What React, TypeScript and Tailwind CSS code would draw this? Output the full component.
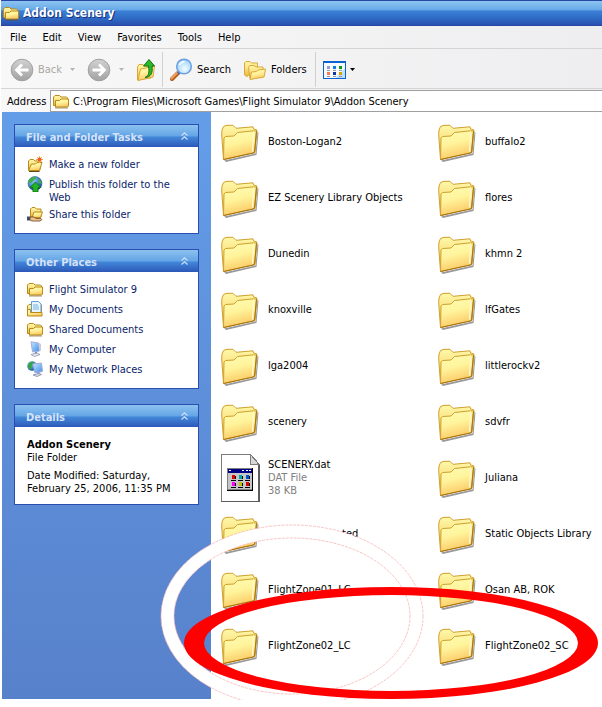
import type { ReactNode } from "react"

type IconName = "newFolder" | "web" | "share" | "folder" | "documents" | "computer" | "network"

const menus = ["File", "Edit", "View", "Favorites", "Tools", "Help"]

const tasks: { icon: IconName; label: string }[] = [
  { icon: "newFolder", label: "Make a new folder" },
  { icon: "web", label: "Publish this folder to the Web" },
  { icon: "share", label: "Share this folder" },
]

const places: { icon: IconName; label: string }[] = [
  { icon: "folder", label: "Flight Simulator 9" },
  { icon: "documents", label: "My Documents" },
  { icon: "folder", label: "Shared Documents" },
  { icon: "computer", label: "My Computer" },
  { icon: "network", label: "My Network Places" },
]

const leftFiles = [
  "Boston-Logan2",
  "EZ Scenery Library Objects",
  "Dunedin",
  "knoxville",
  "lga2004",
  "scenery",
  "SCENERY.dat",
  "ted",
  "FlightZone01_LC",
  "FlightZone02_LC",
]

const rightFiles = [
  "buffalo2",
  "flores",
  "khmn 2",
  "lfGates",
  "littlerockv2",
  "sdvfr",
  "Juliana",
  "Static Objects Library",
  "Osan AB, ROK",
  "FlightZone02_SC",
]

function Gradients() {
  return (
    <svg width="0" height="0" className="absolute" aria-hidden="true">
      <defs>
        <linearGradient id="front" x1="0" y1="0" x2="0.3" y2="1">
          <stop offset="0" stopColor="#fffcb4" />
          <stop offset="0.5" stopColor="#fff49c" />
          <stop offset="1" stopColor="#fcca66" />
        </linearGradient>
        <linearGradient id="back" x1="0" y1="0" x2="0" y2="1">
          <stop offset="0" stopColor="#fff8a8" />
          <stop offset="0.4" stopColor="#fbe488" />
          <stop offset="1" stopColor="#e9b63c" />
        </linearGradient>
        <linearGradient id="disc" x1="0" y1="0" x2="0" y2="1">
          <stop offset="0" stopColor="#d2d2d2" />
          <stop offset="1" stopColor="#a2a2a2" />
        </linearGradient>
        <linearGradient id="screen" x1="0" y1="0" x2="1" y2="1">
          <stop offset="0" stopColor="#c4e8ff" />
          <stop offset="1" stopColor="#3c8ce6" />
        </linearGradient>
        <radialGradient id="lens" cx="0.55" cy="0.65" r="0.6">
          <stop offset="0" stopColor="#f4fdff" />
          <stop offset="1" stopColor="#9fd4fb" />
        </radialGradient>
        <radialGradient id="globe" cx="0.35" cy="0.3" r="0.8">
          <stop offset="0" stopColor="#8cd0ff" />
          <stop offset="1" stopColor="#0c3fa0" />
        </radialGradient>
      </defs>
    </svg>
  )
}

function SmallFolderShape() {
  return (
    <>
      <path d="M.5 12.500V4L2 2.500h4.500L8 4h5.500l1 1v7.500z" fill="url(#back)" stroke="#b98a18" />
      <path d="M2.500 7.500h4L8 6h7.500v7l-1 1h-12z" fill="url(#front)" stroke="#b98a18" />
      <path d="M2 15h13" stroke="#6b5212" strokeOpacity="0.6" />
    </>
  )
}

function OpenFolderShape() {
  return (
    <>
      <path d="M1.500 14V5L3 3.500h3.500L8 5h5v9z" fill="url(#back)" stroke="#b98a18" />
      <path d="M1.500 14.500 4.500 8h4L10 6.500h5L12.500 14.500z" fill="url(#front)" stroke="#b98a18" />
      <path d="M2 15.500h10.500" stroke="#5b4a1c" />
    </>
  )
}

function ComputerShape() {
  return (
    <>
      <path d="M4 .8 11.500 2 12.500 10 5.500 11z" fill="url(#screen)" stroke="#a4aedc" />
      <path d="M11.500 1.500 14 3v6.500l-1.500 1z" fill="#c7cbe0" />
      <path d="M9 11v2" stroke="#7c84a8" strokeWidth="2" />
      <path d="M4 13.500 10 12l3 1.500-5.500 2z" fill="#e6e9f2" stroke="#8b92ac" strokeWidth="0.800" />
    </>
  )
}

function SmallIcon({ name }: { name: IconName }) {
  return (
    <svg viewBox="0 0 16 16" className="size-4 shrink-0" aria-hidden="true">
      {name === "folder" && <SmallFolderShape />}
      {name === "newFolder" && (
        <>
          <OpenFolderShape />
          <path d="M12.500 0v7M9 3.500h7M10 1l5 5M15 1l-5 5" stroke="#ffb43c" />
          <circle cx="12.500" cy="3.500" r="2" fill="#f0562a" />
        </>
      )}
      {name === "web" && (
        <>
          <circle cx="8" cy="7.500" r="7" fill="url(#globe)" stroke="#16468c" strokeWidth="0.500" />
          <path d="M2 4c2-3 5-3.500 7-3 1 1-1 2-2 3S5 7 3 7 1 6 2 4zM11 3c2 0 4 3 4 5l-3-1z" fill="#3fae49" />
          <path d="M8.500 6 14 11.500h-3V16H6v-4.500H3z" fill="#22b522" stroke="#0c6a12" strokeWidth="0.800" />
        </>
      )}
      {name === "share" && (
        <>
          <path d="M3.500 11V3L5 1.500h3L9.500 3H14v8z" fill="url(#back)" stroke="#b98a18" />
          <path d="M5 11.500 7 6h8.500L13.500 11.500z" fill="url(#front)" stroke="#b98a18" />
          <path d="M0 10.500h3v4H0z" fill="#3c4c6c" />
          <path d="M3 11h4l2 1.500h5l1 1-2 1.500H5l-2-1z" fill="#f0c090" stroke="#6a4420" strokeWidth="0.800" />
        </>
      )}
      {name === "documents" && (
        <>
          <path d="M.5 13V5L2 3.500h4L7 4h7.500v9z" fill="url(#back)" stroke="#b98a18" />
          <path d="M4.500 12V.5h7l2.500 2.500V12z" fill="#e8f5ff" stroke="#5f9fdc" />
          <path d="M6 4h5M6 6h6M6 8h6" stroke="#72b4e8" />
          <path d="M.5 15v-6.500h3v3H15V15z" fill="url(#front)" stroke="#b98a18" />
        </>
      )}
      {name === "computer" && <ComputerShape />}
      {name === "network" && (
        <>
          <circle cx="5" cy="5" r="4.800" fill="url(#globe)" />
          <path d="M1 4c1-3 4-4 6-3L5 4 4 9 1 7z" fill="#35a540" />
          <path d="M6 3 14.500 2 15.500 10.500 8 12z" fill="url(#screen)" stroke="#a4aedc" />
          <path d="M11.500 11.500v2" stroke="#7c84a8" strokeWidth="2" />
          <path d="M6 14 12 12.500l2.500 1-4.500 2z" fill="#dfe3ee" stroke="#7f86a6" strokeWidth="0.800" />
        </>
      )}
    </svg>
  )
}

function LargeFolder() {
  return (
    <svg viewBox="0 -1 40 40" className="size-10 shrink-0 overflow-visible" aria-hidden="true">
      <path d="M4 37.500 35.500 30.500 37.500 9l1 .5-2 22.500L6 39z" fill="#55555a" fillOpacity="0.600" />
      <path
        d="M3.500 36.500 1.700 12 2 7l1.500-3.500L7 2.300h6l3 3 17-1.500.7 2.200 3.300 1-2 22z"
        fill="url(#back)"
        stroke="#cfa02c"
        strokeLinejoin="round"
      />
      <path
        d="M3.500 36.500 4 15l1.500-1.500 8.500-.5 3.500-3.500 16-1.700 3 .2-2 21.500z"
        fill="url(#front)"
        stroke="#cfa02c"
        strokeLinejoin="round"
      />
      <path d="M33.500 9.500 32.500 28.500" stroke="#fffbd8" strokeWidth="1.200" />
      <path d="M3.500 36.500 34.500 29.800 36.500 8" fill="none" stroke="#a87412" />
    </svg>
  )
}

function DatFileIcon() {
  return (
    <svg viewBox="0 0 40 48" className="h-12 w-10 shrink-0" shapeRendering="crispEdges" aria-hidden="true">
      <path d="M1.500.5h29l8 9v38h-37z" fill="#fff" stroke="#7c7c7c" />
      <path d="M38.500 10v37.500H1" fill="none" stroke="#5c5c5c" strokeWidth="2" />
      <path d="M30.500.5v9.500h8z" fill="#d8d8d8" stroke="#7c7c7c" />
      <path d="M7 14h26v23H7z" fill="#000" />
      <path d="M7 14h25v22H7z" fill="#808080" />
      <path d="M8 15h24v4H8z" fill="#000084" />
      <path d="M8 19h24v16H8z" fill="#c6c6c6" />
      <path d="M9 16h2v1H9zM22 16h2v1h-2zM26 16h2v1h-2zM29 16h2v1h-2z" fill="#fff" />
      <path d="M12 21h3v4h-3zM26 28h3v4h-3z" fill="#e00000" />
      <path d="M19 21h3v4h-3z" fill="#00a5a5" />
      <path d="M26 21h3v4h-3z" fill="#0050d0" />
      <path d="M12 28h3v4h-3z" fill="#ff00ff" />
      <path d="M19 28h3v4h-3z" fill="#c0c000" />
      <path d="M15 22h1v3h-1zM22 22h1v3h-1zM29 22h1v3h-1zM15 29h1v3h-1zM22 29h1v3h-1zM29 29h1v3h-1z" fill="#000" />
      <path d="M11 26h5v1h-5zM18 26h5v1h-5zM25 26h5v1h-5zM11 33h5v1h-5zM18 33h5v1h-5zM25 33h5v1h-5z" fill="#000" />
    </svg>
  )
}

function RoundArrow({ forward = false }: { forward?: boolean }) {
  return (
    <svg viewBox="0 0 24 24" className="size-6 shrink-0" aria-hidden="true">
      <circle cx="12" cy="12" r="10.800" fill="url(#disc)" stroke="#a0a0a0" />
      <path
        d={forward ? "M5.500 12h12M12 6.500l5.500 5.500-5.500 5.500" : "M18.500 12h-12M12 6.500 6.500 12l5.500 5.500"}
        fill="none"
        stroke="#fff"
        strokeWidth="2.800"
      />
    </svg>
  )
}

function Caret({ dark = false }: { dark?: boolean }) {
  return (
    <svg viewBox="0 0 5 3" className="h-[3px] w-[5px] shrink-0" aria-hidden="true">
      <path d="M0 0h5L2.500 3z" fill={dark ? "#000" : "#b4b4ae"} />
    </svg>
  )
}

function Toolbar() {
  return (
    <div className="flex h-10 items-center border-b border-[#d4d4d4] pt-0.5">
      <button className="ml-[9px] flex items-center gap-1 text-[#a8a8a0]">
        <RoundArrow />
        Back
      </button>
      <button aria-label="Back history" className="ml-2 flex h-6 items-center">
        <Caret />
      </button>
      <button aria-label="Forward" className="ml-3">
        <RoundArrow forward />
      </button>
      <button aria-label="Forward history" className="ml-2 flex h-6 items-center">
        <Caret />
      </button>
      <button aria-label="Up" className="ml-3">
        <svg viewBox="0 0 20 24" className="h-6 w-5" aria-hidden="true">
          <path d="M1.500 22V9L3 6.500h4L8.500 8H15v12z" fill="url(#back)" stroke="#dca83a" />
          <path d="M2 22.500 4.500 11 10 10l8.500-2L17 19z" fill="url(#front)" stroke="#dca83a" />
          <path d="M9 19.500c4-2 4.500-5 3.500-11.500H7.500L13 1.500 18.500 8H16c1 7-1 11-7 11.500z" fill="#2eb82e" stroke="#11720f" />
        </svg>
      </button>
      <div className="mx-1.5 h-[35px] w-px bg-[#d0d0d0]" />
      <button className="flex items-center gap-1">
        <svg viewBox="0 0 24 24" className="size-6" aria-hidden="true">
          <path d="M9.500 14.500 3 21" stroke="#b75b1c" strokeWidth="4" strokeLinecap="round" />
          <path d="M9 14 2.500 20.500" stroke="#f2a25e" strokeWidth="2" strokeLinecap="round" />
          <path d="M9 15.500 12 12.500" stroke="#4468b0" strokeWidth="3" />
          <circle cx="15" cy="8.500" r="7.300" fill="url(#lens)" stroke="#6d9fe0" strokeWidth="1.500" />
          <path d="M10.500 7c1-2 3-3.500 5-3.300" stroke="#fff" strokeWidth="1.500" fill="none" />
        </svg>
        Search
      </button>
      <button className="ml-3 flex items-center gap-1">
        <svg viewBox="0 0 24 24" className="size-6" aria-hidden="true">
          <path d="M1.500 17V5L3 3.500h4L8.500 5h6v5L4 18.500z" fill="url(#back)" stroke="#dca83a" />
          <path d="M7 20.500 5.500 9.500 7 7.500h4L13 9h7v10z" fill="url(#back)" stroke="#dca83a" />
          <path d="M7 21.500 8.500 14l5-.5L15 12l7.500-1L21 19z" fill="url(#front)" stroke="#dca83a" />
        </svg>
        Folders
      </button>
      <div className="mr-[7px] ml-2 h-[35px] w-px bg-[#d0d0d0]" />
      <button aria-label="Views" className="flex items-center gap-1">
        <svg viewBox="0 0 23 20" className="h-5 w-[23px]" shapeRendering="crispEdges" aria-hidden="true">
          <path d="M0 1h23v18H0z" fill="#0a62d0" />
          <path d="M1 3h21v15H1z" fill="#f4faff" />
          <path d="M22 9v9H12z" fill="#bfe0fb" />
          <path d="M4 6h3v3H4z" fill="#9a9ad0" />
          <path d="M10 6h3v3h-3z" fill="#0a7ae6" />
          <path d="M16 6h3v3h-3z" fill="#0a9c10" />
          <path d="M4 12h3v3H4z" fill="#ff7a50" />
          <path d="M10 12h3v3h-3z" fill="#0838a0" />
          <path d="M16 12h3v3h-3z" fill="#d8a000" />
          <path d="M4 10h3v1H4zM10 10h3v1h-3zM16 10h3v1h-3zM4 16h3v1H4zM10 16h3v1h-3zM16 16h3v1h-3z" fill="#9a9a9a" />
        </svg>
        <Caret dark />
      </button>
    </div>
  )
}

function Panel({ title, children }: { title: string; children: ReactNode }) {
  return (
    <section className="border border-[#2a4db0] bg-white">
      <h2 className="flex h-[22px] items-center justify-between bg-[linear-gradient(#8cc2f0_0%,#66a6e6_48%,#4286d8_56%,#2c58b8_100%)] pt-0.5 pr-2.5 pl-[11px] font-bold text-[#d6e2fa]">
        {title}
        <button aria-label={`Collapse ${title}`} className="pb-0.5">
          <svg viewBox="0 0 7 8" className="h-2 w-[7px]" aria-hidden="true">
            <path d="M.5 3.500 3.500.8l3 2.700M.5 7.500 3.500 4.800l3 2.700" fill="none" stroke="#c9defa" strokeWidth="1.200" />
          </svg>
        </button>
      </h2>
      {children}
    </section>
  )
}

function LinkList({ items }: { items: { icon: IconName; label: string }[] }) {
  return (
    <ul className="px-3 pt-[7px] pb-[9px]">
      {items.map((item) => (
        <li key={item.label}>
          <a href="#" className="flex gap-1.5 pt-0.5 text-[#0a246a]">
            <SmallIcon name={item.icon} />
            <span className="min-h-[18px] pt-0.5 pr-4">{item.label}</span>
          </a>
        </li>
      ))}
    </ul>
  )
}

function FileColumn({ files }: { files: string[] }) {
  return (
    <ul>
      {files.map((name) => (
        <li key={name} className="h-14">
          <button className="flex h-full items-center gap-2 pl-[9px] text-left whitespace-nowrap">
            {name === "SCENERY.dat" ? <DatFileIcon /> : <LargeFolder />}
            {name === "SCENERY.dat" ? (
              <span className="pb-0.5">
                {name}
                <span className="block text-[#808080]">DAT File</span>
                <span className="block text-[#808080]">38 KB</span>
              </span>
            ) : (
              <span className={name === "ted" ? "pb-0.5 pl-[74px]" : "pb-0.5"}>{name}</span>
            )}
          </button>
        </li>
      ))}
    </ul>
  )
}

// Hand-drawn style rings that lie over the file list
function Rings() {
  return (
    <svg viewBox="0 0 602 707" width="602" height="707" className="pointer-events-none absolute top-0 left-0" aria-hidden="true">
      <ellipse cx="292" cy="616" rx="124.500" ry="84.500" fill="none" stroke="#fff" strokeWidth="13" />
      <clipPath id="ringClip">
        <path d="M0 0h602v700H0z" />
      </clipPath>
      <g fill="none" stroke="#f9b4b4" strokeWidth="0.800" strokeDasharray="3 1" clipPath="url(#ringClip)">
        <ellipse cx="292" cy="616" rx="131" ry="91" />
        <ellipse cx="292" cy="616" rx="118" ry="78" />
      </g>
      <path
        d="M184 643a207 56 0 1 0 414 0a207 56 0 1 0-414 0zM204 643a187 48 0 1 0 374 0a187 48 0 1 0-374 0z"
        fill="#f00"
        fillRule="evenodd"
      />
    </svg>
  )
}

export default function App() {
  return (
    <div className="relative flex min-h-screen flex-col overflow-hidden bg-white pb-2 font-['DejaVu_Sans_Condensed','DejaVu_Sans',sans-serif] text-[11px] leading-[13px] text-black">
      <Gradients />
      <header className="ml-px bg-linear-to-r from-[#f8f8f8] to-[#eeeef0]">
        <div className="flex h-[26px] items-center gap-1 border-y border-[#2846a4] bg-[linear-gradient(#8cc4f0_0%,#68aae8_36%,#3c80d6_42%,#3070c8_65%,#2850b0_100%)] pl-0.5">
          <SmallIcon name="folder" />
          <h1 className="text-[12px] font-bold text-white [text-shadow:1px_1px_#16307c]">Addon Scenery</h1>
        </div>
        <nav className="flex h-[23px] items-center gap-4 border-b border-[#d4d4d4] pl-[9px]">
          {menus.map((menu) => (
            <button key={menu}>{menu}</button>
          ))}
        </nav>
        <Toolbar />
        <div className="flex h-[23px] items-stretch pt-px">
          <label htmlFor="address" className="flex w-[49px] items-center pl-1.5">
            Address
          </label>
          <div className="flex flex-1 items-center gap-1 border-y border-l border-[#a0a0a0] bg-white pl-0.5">
            <SmallIcon name="folder" />
            <input
              id="address"
              className="min-w-0 flex-1 outline-none"
              defaultValue="C:\Program Files\Microsoft Games\Flight Simulator 9\Addon Scenery"
            />
          </div>
        </div>
      </header>

      <div className="ml-0.5 flex flex-1">
        <aside className="flex w-[209px] shrink-0 flex-col gap-[15px] bg-linear-to-b from-[#639de8] to-[#5881cb] p-3">
          <Panel title="File and Folder Tasks">
            <LinkList items={tasks} />
          </Panel>
          <Panel title="Other Places">
            <LinkList items={places} />
          </Panel>
          <Panel title="Details">
            <div className="px-3 pt-[11px] pb-[9px]">
              <p className="font-bold">Addon Scenery</p>
              <p>File Folder</p>
              <p className="mt-[5px]">Date Modified: Saturday, February 25, 2006, 11:35 PM</p>
            </div>
          </Panel>
        </aside>
        <main className="grid flex-1 grid-cols-[217px_1fr] content-start pt-0.5">
          <FileColumn files={leftFiles} />
          <FileColumn files={rightFiles} />
        </main>
      </div>
      <Rings />
    </div>
  )
}
